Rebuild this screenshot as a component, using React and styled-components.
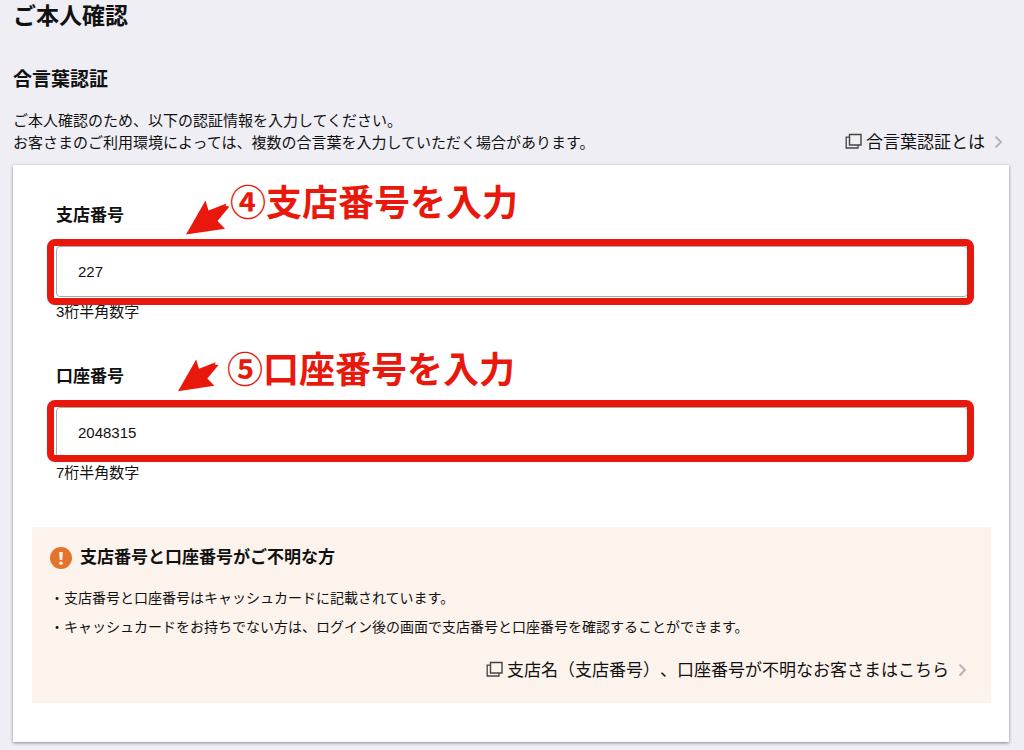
import React, { useState } from "react";
import styled, { createGlobalStyle } from "styled-components";

const GlobalStyle = createGlobalStyle`
  * {
    box-sizing: border-box;
  }
  body {
    margin: 0;
    background: #efeef4;
    color: #111;
    font-family: "Liberation Sans", "Noto Sans CJK JP", sans-serif;
    text-spacing-trim: space-all;
  }
`;

const Page = styled.main`
  padding: 0 15px 8px 13px;
`;

const Title = styled.h1`
  margin: 0;
  font-size: 23px;
  line-height: 32px;
`;

const Subtitle = styled.h2`
  margin: 33px 0 15px;
  font-size: 19px;
  line-height: 30px;
`;

const Intro = styled.div`
  display: flex;
  justify-content: space-between;
  align-items: flex-end;
  margin-bottom: 11px;
`;

const IntroText = styled.p`
  margin: 0;
  font-size: 15px;
  line-height: 22px;
`;

const HelpLink = styled.a`
  display: flex;
  align-items: center;
  gap: 4px;
  padding-right: 6px;
  color: #111;
  font-size: 17px;
  line-height: 22px;
  text-decoration: none;
`;

const Chevron = styled.svg`
  margin-left: 5px;
`;

const Card = styled.form`
  padding: 39px 18px 39px 19px;
  background: white;
  box-shadow: 0 1px 3px rgba(60, 60, 80, 0.6);
`;

const Field = styled.div`
  margin: 0 23px 41px 24px;
`;

const LabelRow = styled.div`
  position: relative;
  margin-bottom: 18px;
`;

const Label = styled.label`
  display: block;
  font-size: 17px;
  font-weight: bold;
  line-height: 24px;
`;

const Note = styled.div`
  position: absolute;
  top: ${(props) => props.$top}px;
  left: ${(props) => props.$left}px;
  display: flex;
  align-items: flex-start;
  gap: ${(props) => props.$gap}px;
  color: #e8190c;
  font-family: "Noto Sans CJK JP", sans-serif;
  font-size: 36px;
  font-weight: bold;
  line-height: 48px;
  white-space: nowrap;
`;

const Arrow = styled.svg`
  width: ${(props) => props.$width}px;
  margin-top: ${(props) => props.$drop}px;
`;

const InputBox = styled.div`
  position: relative;
`;

const Highlight = styled.div`
  position: absolute;
  top: -7px;
  right: -6px;
  bottom: ${(props) => props.$bottom}px;
  left: -9px;
  border: 7px solid #e8190c;
  border-radius: 8px;
  pointer-events: none;
`;

const Input = styled.input`
  display: block;
  width: 100%;
  height: 51px;
  padding: 0 21px;
  border: 1px solid #a9a9ad;
  border-radius: 4px;
  background: white;
  color: #111;
  font-family: inherit;
  font-size: 15px;
`;

const Hint = styled.p`
  margin: 3px 0 0;
  font-size: 15px;
  line-height: 24px;
`;

const Info = styled.section`
  margin-top: 42px;
  padding: 19px 24px 21px 18px;
  background: #fcf3ed;
`;

const InfoTitle = styled.h3`
  display: flex;
  align-items: center;
  gap: 8px;
  margin: 0 0 14px;
  font-size: 17px;
  line-height: 24px;
`;

const InfoList = styled.ul`
  margin: 0 0 18px;
  padding: 0;
  list-style: none;
  font-size: 14px;
  line-height: 29px;
`;

const InfoFooter = styled.div`
  display: flex;
  justify-content: flex-end;
  margin-right: -6px;
`;

function WindowIcon() {
  return (
    <svg width="17" height="20" viewBox="0 0 17 20" fill="none" stroke="#444">
      <path d="M4.5 1.5H16V12H4.5Z" strokeWidth="1.4" />
      <path d="M4.5 4.2H1.2V15H13V12" strokeWidth="1.3" />
    </svg>
  );
}

function ChevronIcon() {
  return (
    <Chevron width="9" height="16" viewBox="0 0 9 16" fill="none" stroke="#b3b3b6">
      <path d="M1.5 1.5L7 7L1.5 12.5" strokeWidth="1.9" />
    </Chevron>
  );
}

function AlertIcon() {
  return (
    <svg width="22" height="22" viewBox="0 0 22 22">
      <circle cx="11" cy="11" r="11" fill="#e4732b" />
      <path d="M9.2 5H12.8L12.3 13H9.7Z" fill="#fdf3ec" />
      <circle cx="11" cy="16.2" r="1.8" fill="#fdf3ec" />
    </svg>
  );
}

function ArrowIcon({ width, drop }) {
  return (
    <Arrow viewBox="0 0 44 35" fill="#e8190c" $width={width} $drop={drop}>
      <path d="M0 34.5L19.5 0.5L22.5 10.5L40.5 3.5L39.5 6L43.5 6.5L31.5 21L39 28.8Z" />
    </Arrow>
  );
}

function App() {
  const [branch, setBranch] = useState("227");
  const [account, setAccount] = useState("2048315");

  return (
    <Page lang="ja">
      <GlobalStyle />
      <Title>ご本人確認</Title>
      <Subtitle>合言葉認証</Subtitle>
      <Intro>
        <IntroText>
          ご本人確認のため、以下の認証情報を入力してください。
          <br />
          お客さまのご利用環境によっては、複数の合言葉を入力していただく場合があります。
        </IntroText>
        <HelpLink href="#about">
          <WindowIcon />
          合言葉認証とは
          <ChevronIcon />
        </HelpLink>
      </Intro>
      <Card>
        <Field>
          <LabelRow>
            <Label htmlFor="branch">支店番号</Label>
            <Note $top={-28} $left={130} $gap={0}>
              <ArrowIcon width={44} drop={24} />
              ④支店番号を入力
            </Note>
          </LabelRow>
          <InputBox>
            <Input
              id="branch"
              value={branch}
              onChange={(e) => setBranch(e.target.value)}
            />
            <Highlight $bottom={-8} />
          </InputBox>
          <Hint>3桁半角数字</Hint>
        </Field>
        <Field>
          <LabelRow>
            <Label htmlFor="account">口座番号</Label>
            <Note $top={-22} $left={122} $gap={8}>
              <ArrowIcon width={41} drop={16} />
              ⑤口座番号を入力
            </Note>
          </LabelRow>
          <InputBox>
            <Input
              id="account"
              value={account}
              onChange={(e) => setAccount(e.target.value)}
            />
            <Highlight $bottom={-4} />
          </InputBox>
          <Hint>7桁半角数字</Hint>
        </Field>
        <Info>
          <InfoTitle>
            <AlertIcon />
            支店番号と口座番号がご不明な方
          </InfoTitle>
          <InfoList>
            <li>・支店番号と口座番号はキャッシュカードに記載されています。</li>
            <li>
              ・キャッシュカードをお持ちでない方は、ログイン後の画面で支店番号と口座番号を確認することができます。
            </li>
          </InfoList>
          <InfoFooter>
            <HelpLink href="#unknown">
              <WindowIcon />
              支店名（支店番号）、口座番号が不明なお客さまはこちら
              <ChevronIcon />
            </HelpLink>
          </InfoFooter>
        </Info>
      </Card>
    </Page>
  );
}

export default App;
